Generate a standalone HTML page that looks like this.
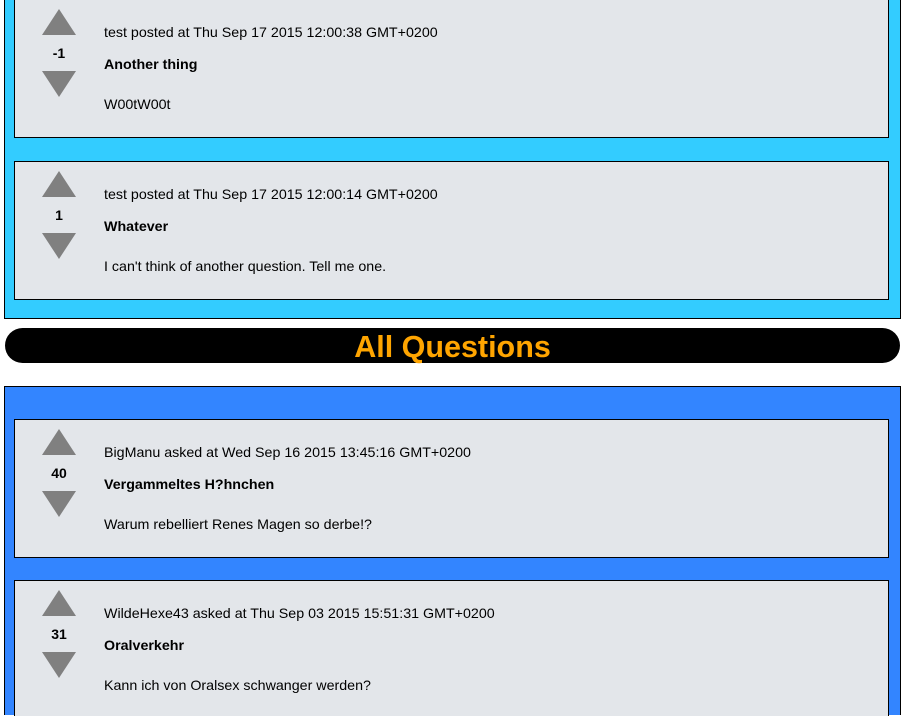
<!DOCTYPE html>
<html style="height:716px;overflow:hidden"><head><meta charset="utf-8"><style>
body{margin:0;width:905px;height:716px;overflow:hidden;background:#fff;font-family:"Liberation Sans",Arial,sans-serif;position:relative}
.sec{position:absolute;left:4px;width:895px;border:1px solid #000}
.card{position:absolute;left:14px;width:873px;height:137px;border:1px solid #000;background:#e3e6ea}
.up,.dn{position:absolute;left:27px;width:0;height:0;border-left:17px solid transparent;border-right:17px solid transparent}
.up{top:9px;border-bottom:26px solid #808080}
.dn{top:71px;border-top:26px solid #808080}
.num{position:absolute;left:27px;width:34px;top:45px;text-align:center;font-weight:bold;font-size:14px;line-height:16px}
.t{position:absolute;left:89px;font-size:14.25px;line-height:16px;white-space:nowrap}
.m{top:25px}.ti{top:57px;font-weight:bold}.b{top:97px}
.pill{position:absolute;left:5px;top:328px;width:895px;height:35px;background:#000;border-radius:18px;color:#ffa500;font-weight:bold;font-size:30.5px;text-align:center;line-height:38px}
</style></head><body>
<div class="sec" style="top:-10px;height:327px;background:#33ccff"></div>
<div class="card" style="top:-1px"><div class="up"></div><div class="num">-1</div><div class="dn"></div>
<div class="t m">test posted at Thu Sep 17 2015 12:00:38 GMT+0200</div><div class="t ti">Another thing</div><div class="t b">W00tW00t</div></div>
<div class="card" style="top:161px"><div class="up"></div><div class="num">1</div><div class="dn"></div>
<div class="t m">test posted at Thu Sep 17 2015 12:00:14 GMT+0200</div><div class="t ti">Whatever</div><div class="t b">I can't think of another question. Tell me one.</div></div>
<div class="pill">All Questions</div>
<div class="sec" style="top:386px;height:328px;border-bottom:none;background:#3385ff"></div>
<div class="card" style="top:419px"><div class="up"></div><div class="num">40</div><div class="dn"></div>
<div class="t m">BigManu asked at Wed Sep 16 2015 13:45:16 GMT+0200</div><div class="t ti">Vergammeltes H?hnchen</div><div class="t b">Warum rebelliert Renes Magen so derbe!?</div></div>
<div class="card" style="top:580px;height:135px;border-bottom:none"><div class="up"></div><div class="num">31</div><div class="dn"></div>
<div class="t m">WildeHexe43 asked at Thu Sep 03 2015 15:51:31 GMT+0200</div><div class="t ti">Oralverkehr</div><div class="t b">Kann ich von Oralsex schwanger werden?</div></div>
</body></html>
